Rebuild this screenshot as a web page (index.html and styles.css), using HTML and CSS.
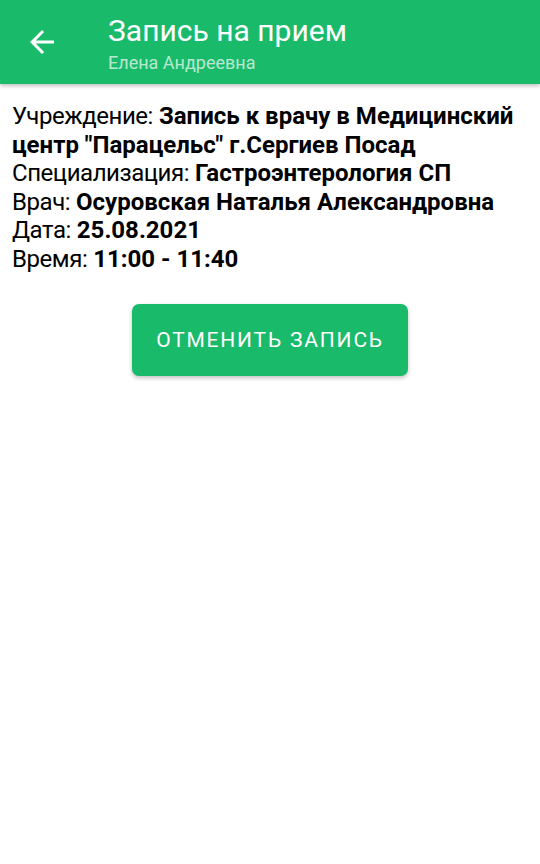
FILE: index.html
```html
<!DOCTYPE html>
<html lang="ru">
<head>
<meta charset="utf-8">
<title>Запись на прием</title>
<link rel="stylesheet" href="styles.css">
</head>
<body>
<header class="toolbar">
  <div class="nav">
    <svg class="back" viewBox="0 0 24 24" width="36" height="36"><path d="M20 11H7.83l5.59-5.59L12 4l-8 8 8 8 1.41-1.41L7.83 13H20v-2z" fill="#fff"/></svg>
  </div>
  <div class="titles">
    <div class="title">Запись на прием</div>
    <div class="subtitle">Елена Андреевна</div>
  </div>
</header>
<main class="content">
  <div class="info">
    <p><span class="label">Учреждение:</span> <b>Запись к врачу в Медицинский центр "Парацельс" г.Сергиев Посад</b></p>
    <p><span class="label">Специализация:</span> <b>Гастроэнтерология СП</b></p>
    <p><span class="label">Врач:</span> <b>Осуровская Наталья Александровна</b></p>
    <p><span class="label">Дата:</span> <b>25.08.2021</b></p>
    <p><span class="label">Время:</span> <b>11:00 - 11:40</b></p>
  </div>
  <div class="actions">
    <button class="cancel">ОТМЕНИТЬ ЗАПИСЬ</button>
  </div>
</main>
</body>
</html>
```
FILE: styles.css
```css
html, body {
  margin: 0;
  padding: 0;
  background: #fff;
}
body {
  font-family: Roboto, "Noto Sans", sans-serif;
  color: #000;
  width: 540px;
  height: 864px;
  overflow: hidden;
}
.toolbar {
  height: 84px;
  background: #1aba6b;
  display: flex;
  align-items: flex-start;
  box-shadow: 0 2px 4px rgba(0,0,0,0.25);
  position: relative;
}
.nav {
  width: 108px;
  padding: 24px 0 0 24px;
  box-sizing: border-box;
}
.back { display: block; }
.titles {
  display: flex;
  flex-direction: column;
  padding-top: 12px;
}
.title {
  color: #fff;
  font-size: 30px;
  line-height: 38px;
}
.subtitle {
  color: rgba(255,255,255,0.7);
  font-size: 18px;
  line-height: 24px;
  margin-top: 1px;
}
.content {
  padding: 18px 12px 0 12px;
}
.info p {
  margin: 0;
  font-size: 24px;
  line-height: 28.5px;
}
.label {
  letter-spacing: -0.45px;
}
.info b {
  font-weight: 700;
}
.actions {
  display: flex;
  justify-content: center;
  padding-top: 31px;
}
.cancel {
  width: 276px;
  height: 72px;
  border: none;
  border-radius: 7px;
  background: #1aba6b;
  color: #fff;
  font-family: Roboto, sans-serif;
  font-size: 21px;
  letter-spacing: 1.8px;
  box-shadow: 0 2px 4px rgba(0,0,0,0.25);
  padding: 0;
}
```
